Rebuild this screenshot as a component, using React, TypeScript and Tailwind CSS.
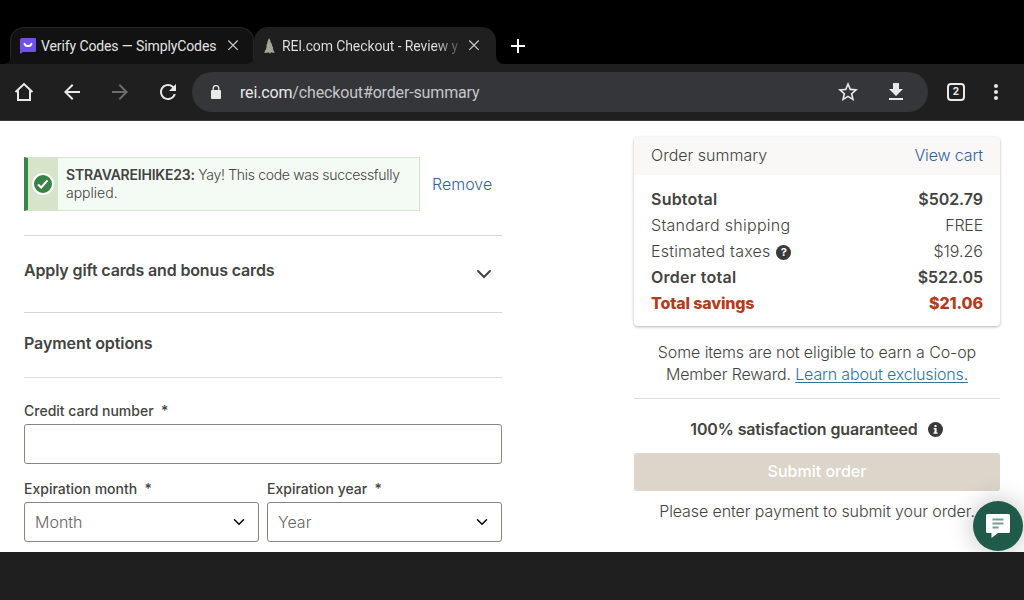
import { MdArrowBack, MdArrowForward, MdRefresh, MdStarBorder, MdFileDownload, MdMoreVert, MdAdd } from 'react-icons/md';

const totals = [
  { label: 'Subtotal', value: '$502.79', labelClass: 'font-semibold tracking-[0.22px]', valueClass: 'font-semibold tracking-[-0.05px]' },
  { label: 'Standard shipping', value: 'FREE', labelClass: 'font-light tracking-[0.28px]', valueClass: 'font-light tracking-[-0.2px]' },
  { label: 'Estimated taxes', value: '$19.26', labelClass: 'font-light tracking-[0.2px]', valueClass: 'font-light', help: true },
  { label: 'Order total', value: '$522.05', labelClass: 'font-semibold tracking-[0.27px]', valueClass: 'font-semibold tracking-[-0.05px]' },
  { label: 'Total savings', value: '$21.06', labelClass: 'font-extrabold tracking-[-0.15px] text-[#b53b1c]', valueClass: 'font-extrabold tracking-[-0.1px] text-[#b53b1c]' },
];

function CloseIcon({ className }: { className: string }) {
  return (
    <svg className={className} viewBox="0 0 16 16" fill="none" stroke="#c4c4c4" strokeWidth="1.300">
      <path d="M3.300 2.500l9.400 9.400M12.700 2.500l-9.400 9.400" />
    </svg>
  );
}

function TabStrip() {
  return (
    <div className="flex h-16 bg-black pl-[10px] pt-[27px] text-[14px] tracking-[-0.11px] text-[#e3e3e3]">
      <div className="relative flex h-[37px] w-[244px] items-center rounded-t-[14px] border border-b-0 border-[#262626] bg-[#121212]">
        <svg className="absolute -left-2 bottom-0 h-2 w-2" viewBox="0 0 8 8">
          <path d="M8 0v8H0a8 8 0 0 0 8-8z" fill="#121212" />
        </svg>
        <svg className="ml-[9px] h-4 w-4" viewBox="0 0 16 16">
          <path d="M2 0h13a1 1 0 0 1 1 1v12a1 1 0 0 1-1 1H3l-3 2V2a2 2 0 0 1 2-2z" fill="#7050e8" />
          <path d="M4.500 5.800c1.200 3 5.800 3 7 0" fill="none" stroke="#fff" strokeWidth="1.900" strokeLinecap="round" />
        </svg>
        <span className="ml-[5px] w-[180px] whitespace-nowrap">Verify Codes — SimplyCodes</span>
        <CloseIcon className="ml-1 size-4" />
      </div>
      <div className="relative flex h-[37px] w-[242px] items-center rounded-t-[14px] bg-[#1f1f1f]">
        <svg className="absolute -left-2 bottom-0 h-2 w-2" viewBox="0 0 8 8">
          <path d="M8 0v8H0a8 8 0 0 0 8-8z" fill="#1f1f1f" />
        </svg>
        <svg className="ml-[10px] h-4 w-[11px]" viewBox="0 0 11 16">
          <path d="M5 0l1.600 3-.4.400 2 3-.5.300 1.700 3.600-.7.200L10.700 15l-3.700-.8-.8 1.600-1.400-1.400L.3 15l1-3.300.6.100.8-3.600-.5-.2 1.300-3.300-.3-.2z" fill="#a8a497" />
        </svg>
        <span className="ml-[7px] mt-px w-[178px] overflow-hidden whitespace-nowrap bg-gradient-to-r from-[#e3e3e3] from-86% to-[#1f1f1f] to-104% bg-clip-text pt-px text-transparent">REI.com Checkout - Review y</span>
        <CloseIcon className="ml-[6px] size-4" />
        <svg className="absolute -right-2 bottom-0 h-2 w-2" viewBox="0 0 8 8">
          <path d="M0 0v8h8a8 8 0 0 1-8-8z" fill="#1f1f1f" />
        </svg>
      </div>
      <MdAdd className="ml-[10px] mt-[7px] size-6 text-white" />
    </div>
  );
}

function Toolbar() {
  return (
    <div className="flex h-[57px] items-center border-b border-[#3a3a3a] bg-[#1f1f1f] pl-3 text-[#e8e8e8]">
      <svg className="size-6" viewBox="0 0 24 24" fill="none" stroke="currentColor" strokeWidth="2">
        <path d="M3.500 12L12 4l8.500 8M6 10.500V20h12v-9.500" />
      </svg>
      <MdArrowBack className="ml-6 size-6" />
      <MdArrowForward className="ml-6 size-6 text-[#6b6b6b]" />
      <MdRefresh className="ml-6 size-6" />
      <div className="ml-3 flex h-10 w-[736px] items-center rounded-full bg-[#35363a]">
        <svg className="ml-4 size-4" viewBox="0 0 16 16">
          <rect x="3" y="6" width="10" height="9" rx="1" fill="currentColor" />
          <path d="M5.200 6.500V4.500a2.800 2.800 0 0 1 5.600 0v2" fill="none" stroke="currentColor" strokeWidth="1.300" />
        </svg>
        <span className="ml-4 flex-1 pt-0.5 text-[16px] tracking-[-0.15px] text-[#c4c6c9]">
          <span className="text-[#e8e8e8]">rei.com</span>/checkout#order-summary
        </span>
        <MdStarBorder className="size-6" />
        <MdFileDownload className="ml-6 mr-5 size-6" />
      </div>
      <div className="ml-[19px] flex size-[18px] items-center justify-center rounded-[4px] border-2 border-[#e8e8e8] text-[11px] font-bold">2</div>
      <MdMoreVert className="ml-[19px] size-6" />
    </div>
  );
}

function Chevron({ className }: { className: string }) {
  return (
    <svg className={className} viewBox="0 0 16 10" fill="none" stroke="currentColor" strokeWidth="2" strokeLinecap="round">
      <path d="M2 2l6 6 6-6" />
    </svg>
  );
}

function SelectField({ label, placeholder }: { label: string; placeholder: string }) {
  return (
    <div className="w-[235px]">
      <div className="h-[26px] text-[14px] font-medium leading-[26px]">{label}&nbsp; *</div>
      <div className="flex h-10 items-center justify-between rounded-[3px] border border-[#87857f] pl-[10px] pr-[13px] text-[16px] font-light text-[#666]">
        {placeholder}
        <Chevron className="h-[8px] w-[12px] text-black" />
      </div>
    </div>
  );
}

function PaymentColumn() {
  return (
    <div className="w-[478px] pt-9">
      <div className="flex items-center">
        <div className="flex h-[54px] w-[396px] border border-l-4 border-[#d5e3d0] border-l-[#3c8549] bg-[#f4faf4]">
          <div className="flex w-[30px] items-center justify-center bg-[#d6e5ca]">
            <svg className="size-[22px]" viewBox="0 0 22 22">
              <circle cx="11" cy="11" r="10" fill="#388147" stroke="#fff" strokeWidth="2" />
              <path d="M6 11.500l3.200 3 6.300-7.200" fill="none" stroke="#fff" strokeWidth="2" />
            </svg>
          </div>
          <p className="pl-2 pt-2 text-[14px] font-light leading-[18px]">
            <span className="tracking-[-0.31px]"><b className="font-semibold tracking-[-0.22px]">STRAVAREIHIKE23:</b> Yay! This code was successfully</span><br />applied.
          </p>
        </div>
        <a className="ml-3 text-[16px] font-light text-[#365f9f]">Remove</a>
      </div>
      <div className="mt-6 flex h-[78px] items-center justify-between border-y border-[#d6d6d6] pr-[10px]">
        <h2 className="pb-[9px] text-[16px] font-semibold tracking-[-0.14px]">Apply gift cards and bonus cards</h2>
        <Chevron className="h-[10px] w-4" />
      </div>
      <h2 className="h-[65px] border-b border-[#e0e0e0] text-[16px] font-semibold leading-[61px] tracking-[-0.08px]">Payment options</h2>
      <div className="mt-5 h-[26px] text-[14px] font-medium leading-[26px]">Credit card number&nbsp; *</div>
      <div className="h-10 rounded-[3px] border border-[#87857f]" />
      <div className="mt-3 flex gap-2">
        <SelectField label="Expiration month" placeholder="Month" />
        <SelectField label="Expiration year" placeholder="Year" />
      </div>
    </div>
  );
}

function SummaryColumn() {
  return (
    <div className="w-[366px] pt-4 text-[16px]">
      <div className="h-[189px] rounded-[4px] bg-white shadow-[0_1px_3px_rgba(0,0,0,0.3)]">
        <div className="flex h-[38px] items-center justify-between rounded-t-[4px] bg-[#faf8f7] px-[17px] pb-0.5 font-light">
          <span>Order summary</span>
          <a className="tracking-[-0.12px] text-[#365f9f]">View cart</a>
        </div>
        <div className="px-[17px] pt-[11px]">
          {totals.map(row => (
            <div key={row.label} className="flex h-[26px] items-center justify-between">
              <span className={`flex items-center ${row.labelClass}`}>
                {row.label}
                {row.help && <span className="ml-[6px] mt-[3px] flex size-[15px] items-center justify-center rounded-full bg-[#3a3a39] text-[11px] font-bold text-white">?</span>}
              </span>
              <span className={row.valueClass}>{row.value}</span>
            </div>
          ))}
        </div>
      </div>
      <p className="h-[73px] whitespace-nowrap border-b border-[#dedede] pt-[15px] text-center font-light leading-[22px] tracking-[-0.1px]">
        Some items are not eligible to earn a Co-op<br />
        <span className="tracking-[-0.16px]">Member Reward. <a className="text-[#2f749c] underline underline-offset-2">Learn about exclusions.</a></span>
      </p>
      <div className="flex h-[54px] items-center justify-center pr-px pt-1.5 font-semibold tracking-[-0.13px]">
        100% satisfaction guaranteed
        <svg className="ml-[10px] mt-px size-[15px]" viewBox="0 0 15 15">
          <circle cx="7.500" cy="7.500" r="7.500" fill="#3a3a39" />
          <path d="M6.500 3h2v2h-2zM5.700 6h2.900v4.500h1v1.200H5.500v-1.200h1V7.200h-.8z" fill="#fff" />
        </svg>
      </div>
      <div className="flex h-[38px] items-center justify-center rounded-[3px] bg-[#ddd5ca] pb-0.5 font-medium text-white">Submit order</div>
      <p className="whitespace-nowrap text-center font-light leading-[40px] tracking-[-0.1px]">Please enter payment to submit your order.</p>
    </div>
  );
}

export default function App() {
  return (
    <div className="flex h-[600px] w-[1024px] flex-col overflow-hidden bg-[#1f1f1f] font-[Roboto,sans-serif]">
      <TabStrip />
      <Toolbar />
      <main className="relative flex h-[431px] justify-between overflow-hidden bg-white pl-6 pr-6 font-[Inter,sans-serif] text-[#434341]">
        <PaymentColumn />
        <SummaryColumn />
        <button className="absolute bottom-px right-px flex size-[50px] items-center justify-center rounded-full bg-[#1f5a4b] shadow-[0_0_24px_rgba(0,0,0,0.25)]">
          <svg className="size-6" viewBox="0 0 24 24">
            <path d="M1.500 0h21A1.500 1.500 0 0 1 24 1.500v16a1.500 1.500 0 0 1-1.500 1.500H12l-6.500 5V19h-4A1.500 1.500 0 0 1 0 17.500v-16A1.500 1.500 0 0 1 1.500 0z" fill="#fff" />
            <path d="M6.500 5.500h11M6.500 9.500h11M6.500 13.500h6" stroke="#7d9a92" strokeWidth="1.800" />
          </svg>
        </button>
      </main>
    </div>
  );
}
